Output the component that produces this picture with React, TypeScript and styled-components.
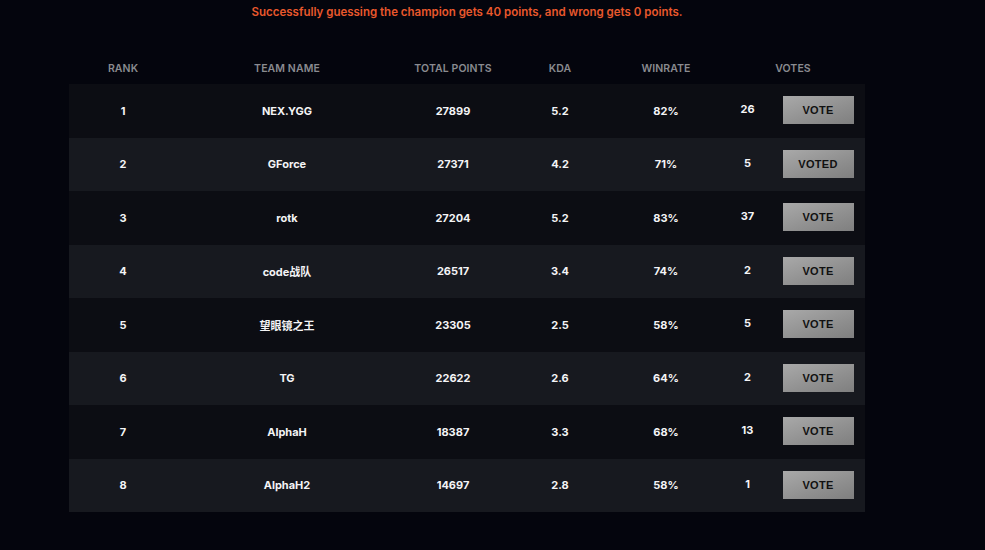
import React from "react";
import styled, { createGlobalStyle } from "styled-components";

const GlobalStyle = createGlobalStyle`
  html, body {
    margin: 0;
    padding: 0;
    background: #04050d;
  }
  body {
    font-family: "Inter", "Noto Sans CJK SC", sans-serif;
  }
`;

const Page = styled.div`
  width: 985px;
  height: 550px;
  background: #04050d;
  overflow: hidden;
`;

const Notice = styled.p`
  margin: 0;
  padding: 4px 51px 0 0;
  height: 16px;
  line-height: 16px;
  text-align: center;
  color: #e9582c;
  font-size: 11.5px;
  font-weight: 600;
`;

const Table = styled.table`
  margin: 32px 0 0 69px;
  width: 796px;
  border-collapse: collapse;
  table-layout: fixed;
`;

const HeadCell = styled.th`
  height: 32px;
  padding: 0;
  font-size: 10.5px;
  font-weight: 600;
  color: #8a8b90;
  text-align: center;
  vertical-align: middle;
  letter-spacing: 0.1px;
`;

const Row = styled.tr<{ $alt: boolean }>`
  height: 53.5px;
  background: ${(p) => (p.$alt ? "#17191f" : "#0c0d13")};
`;

const Cell = styled.td`
  padding: 0;
  text-align: center;
  vertical-align: middle;
  color: #f4f4f6;
  font-size: 11px;
  font-weight: 700;
  font-family: "Inter", "Noto Sans CJK SC", sans-serif;
`;

const VotesBox = styled.div`
  display: flex;
  align-items: center;
  justify-content: center;
  gap: 20px;
`;

const VoteCount = styled.span`
  width: 30px;
  text-align: center;
  margin-top: -3px;
`;

const VoteButton = styled.button`
  width: 71px;
  height: 28px;
  border: none;
  padding: 0;
  background: linear-gradient(160deg, #a9a9a9 0%, #8f8f8f 60%, #7f7f7f 100%);
  color: #111111;
  font-family: "Liberation Sans", "DejaVu Sans", sans-serif;
  font-weight: 700;
  font-size: 11px;
  letter-spacing: 0.3px;
  cursor: pointer;
  margin-top: -1px;
`;

type Team = {
  rank: number;
  name: string;
  points: number;
  kda: string;
  winrate: string;
  votes: number;
  voted?: boolean;
};

const teams: Team[] = [
  { rank: 1, name: "NEX.YGG", points: 27899, kda: "5.2", winrate: "82%", votes: 26 },
  { rank: 2, name: "GForce", points: 27371, kda: "4.2", winrate: "71%", votes: 5, voted: true },
  { rank: 3, name: "rotk", points: 27204, kda: "5.2", winrate: "83%", votes: 37 },
  { rank: 4, name: "code战队", points: 26517, kda: "3.4", winrate: "74%", votes: 2 },
  { rank: 5, name: "望眼镜之王", points: 23305, kda: "2.5", winrate: "58%", votes: 5 },
  { rank: 6, name: "TG", points: 22622, kda: "2.6", winrate: "64%", votes: 2 },
  { rank: 7, name: "AlphaH", points: 18387, kda: "3.3", winrate: "68%", votes: 13 },
  { rank: 8, name: "AlphaH2", points: 14697, kda: "2.8", winrate: "58%", votes: 1 },
];

export default function App() {
  return (
    <Page>
      <GlobalStyle />
      <Notice>Successfully guessing the champion gets 40 points, and wrong gets 0 points.</Notice>
      <Table>
        <colgroup>
          <col style={{ width: 108 }} />
          <col style={{ width: 220 }} />
          <col style={{ width: 112 }} />
          <col style={{ width: 102 }} />
          <col style={{ width: 110 }} />
          <col style={{ width: 144 }} />
        </colgroup>
        <thead>
          <tr>
            <HeadCell>RANK</HeadCell>
            <HeadCell>TEAM NAME</HeadCell>
            <HeadCell>TOTAL POINTS</HeadCell>
            <HeadCell>KDA</HeadCell>
            <HeadCell>WINRATE</HeadCell>
            <HeadCell>VOTES</HeadCell>
          </tr>
        </thead>
        <tbody>
          {teams.map((t, i) => (
            <Row key={t.rank} $alt={i % 2 === 1}>
              <Cell>{t.rank}</Cell>
              <Cell>{t.name}</Cell>
              <Cell>{t.points}</Cell>
              <Cell>{t.kda}</Cell>
              <Cell>{t.winrate}</Cell>
              <Cell>
                <VotesBox>
                  <VoteCount>{t.votes}</VoteCount>
                  <VoteButton>{t.voted ? "VOTED" : "VOTE"}</VoteButton>
                </VotesBox>
              </Cell>
            </Row>
          ))}
        </tbody>
      </Table>
    </Page>
  );
}
